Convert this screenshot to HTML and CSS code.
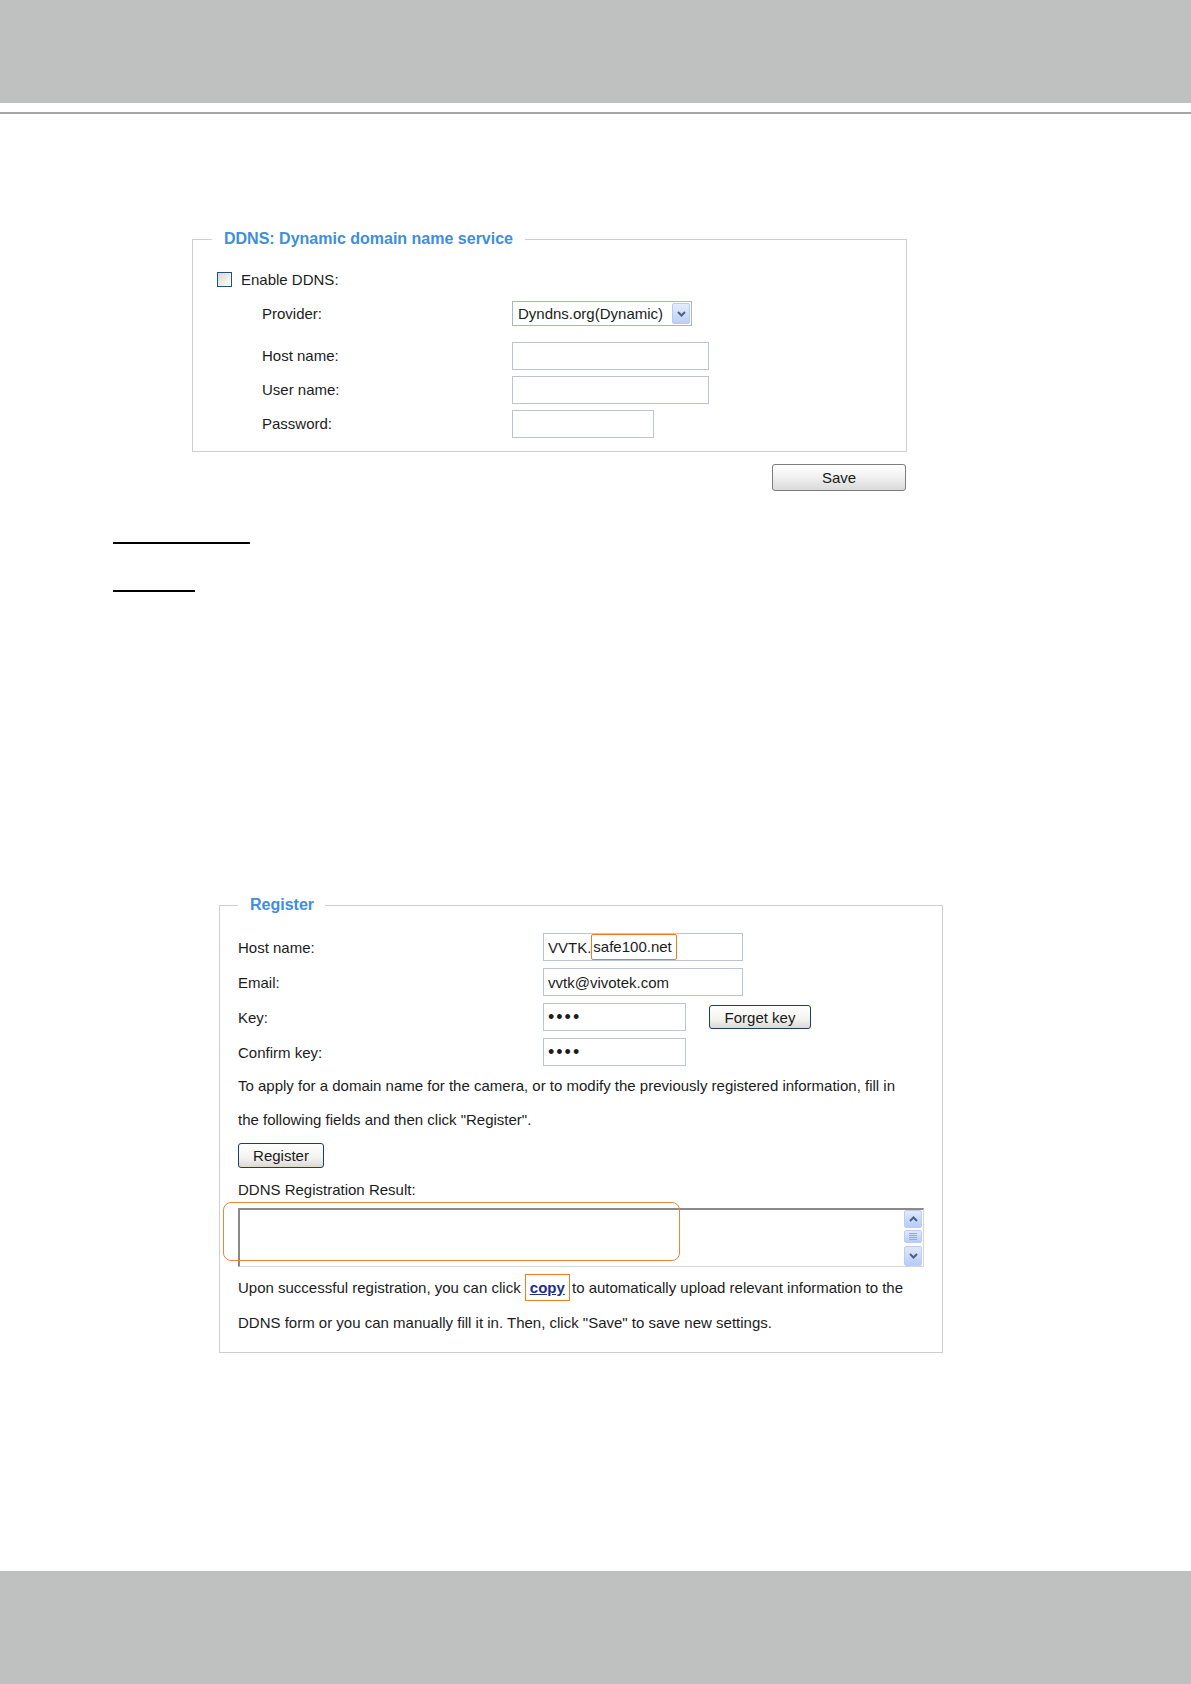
FILE: index.html
```html
<!DOCTYPE html>
<html lang="en">
  <head>
    <meta charset="UTF-8" />
    <meta name="viewport" content="width=device-width, initial-scale=1.0" />
    <title>DDNS — Network Settings</title>
    <link rel="stylesheet" href="styles.css">
  </head>
  <body>
    <div class="top-bar"></div>
    <div class="top-rule"></div>

    <main class="page">
      <div class="ddns-block">
        <fieldset class="panel panel-ddns">
          <legend>DDNS: Dynamic domain name service</legend>
          <div class="panel-body">
            <label class="form-row check-row">
              <span class="checkbox"></span>Enable DDNS:
            </label>
            <div class="form-row indent">
              <span class="field-label">Provider:</span>
              <div class="select">
                <span class="select-text">Dyndns.org(Dynamic)</span>
                <span class="select-arrow">
                  <svg width="9" height="6" viewBox="0 0 9 6"><path d="M1 1 L4.5 4.5 L8 1" fill="none" stroke="#4d6185" stroke-width="2"/></svg>
                </span>
              </div>
            </div>
            <div class="form-row indent spaced">
              <span class="field-label">Host name:</span>
              <input type="text" class="field field-wide">
            </div>
            <div class="form-row indent">
              <span class="field-label">User name:</span>
              <input type="text" class="field field-wide">
            </div>
            <div class="form-row indent">
              <span class="field-label">Password:</span>
              <input type="password" class="field field-short">
            </div>
          </div>
        </fieldset>
        <div class="save-row">
          <button class="btn btn-save">Save</button>
        </div>
      </div>

      <div class="blank-line blank-long"></div>
      <div class="blank-line blank-short"></div>

      <fieldset class="panel panel-register">
        <legend>Register</legend>
        <div class="panel-body">
          <div class="reg-rows">
            <div class="form-row">
              <span class="reg-label">Host name:</span>
              <div class="field field-host">VVTK.<span class="host-mark">safe100.net</span></div>
            </div>
            <div class="form-row">
              <span class="reg-label">Email:</span>
              <input type="text" class="field field-host" value="vvtk@vivotek.com">
            </div>
            <div class="form-row">
              <span class="reg-label">Key:</span>
              <input type="password" class="field field-key" value="abcd">
              <button class="btn btn-xp btn-forget">Forget key</button>
            </div>
            <div class="form-row">
              <span class="reg-label">Confirm key:</span>
              <input type="password" class="field field-key" value="abcd">
            </div>
          </div>

          <p class="note">To apply for a domain name for the camera, or to modify the previously registered information, fill in the following fields and then click "Register".</p>
          <button class="btn btn-xp btn-register">Register</button>

          <div class="result-label">DDNS Registration Result:</div>
          <div class="result-box">
            <div class="result-area"></div>
            <div class="scrollbar">
              <span class="sb-btn sb-up">
                <svg width="9" height="6" viewBox="0 0 9 6"><path d="M1 5 L4.5 1.5 L8 5" fill="none" stroke="#4d6185" stroke-width="2"/></svg>
              </span>
              <span class="sb-btn sb-thumb">
                <svg width="8" height="7" viewBox="0 0 8 7"><path d="M0 0.5 H8 M0 2.5 H8 M0 4.5 H8 M0 6.5 H8" stroke="#8fa8e0" stroke-width="1"/></svg>
              </span>
              <span class="sb-btn sb-down">
                <svg width="9" height="6" viewBox="0 0 9 6"><path d="M1 1 L4.5 4.5 L8 1" fill="none" stroke="#4d6185" stroke-width="2"/></svg>
              </span>
            </div>
            <span class="result-mark"></span>
          </div>

          <p class="note note-bottom">Upon successful registration, you can click <a class="copy-link" href="#">copy</a> to automatically upload relevant information to the DDNS form or you can manually fill it in. Then, click "Save" to save new settings.</p>
        </div>
      </fieldset>
    </main>

    <div class="bottom-bar"></div>
  </body>
</html>
```

FILE: styles.css
```css
* {
  box-sizing: border-box;
}

body {
  margin: 0;
  font-family: "Liberation Sans", Arial, sans-serif;
  font-size: 15px;
  color: #1c1c1c;
  background: #fff;
  display: flex;
  flex-direction: column;
  min-height: 100vh;
}

.top-bar {
  height: 103px;
  background: #bfc1c0;
}

.top-rule {
  height: 2px;
  margin-top: 9px;
  background: #a6a6a6;
}

.page {
  display: flex;
  flex-direction: column;
  align-items: flex-start;
}

/* shared fieldset look */
.panel {
  margin: 0;
  padding: 0;
  border: 1px solid #cfcfcf;
  min-inline-size: 0;
}

.panel legend {
  margin-left: 19px;
  padding: 0 12px;
  font-size: 16px;
  font-weight: bold;
  line-height: 18px;
  color: #3f8edb;
}

.form-row {
  display: flex;
  align-items: center;
  height: 29px;
}

.field {
  height: 28px;
  margin: 0;
  padding: 0 4px;
  border: 1px solid #bcc5d7;
  font-family: inherit;
  font-size: 15px;
  color: #1c1c1c;
  background: #fff;
  outline: none;
}

input[type="password"].field {
  font-size: 18px;
  letter-spacing: 2px;
}

.btn {
  padding: 0;
  font-family: inherit;
  font-size: 15px;
  color: #1a1a1a;
  border-radius: 3px;
  cursor: pointer;
}

/* DDNS block */
.ddns-block {
  width: 715px;
  margin: 116px 0 0 192px;
}

.panel-ddns {
  width: 100%;
}

.panel-ddns .panel-body {
  padding: 17px 0 13px 24px;
}

.panel-ddns .form-row + .form-row {
  margin-top: 5px;
}

.panel-ddns .form-row.spaced {
  margin-top: 13px;
}

.checkbox {
  width: 15px;
  height: 15px;
  margin-right: 9px;
  flex-shrink: 0;
  border: 1px solid #1d5281;
  background: linear-gradient(135deg, #d6d6d0, #f4f4f2 70%, #fff);
}

.indent .field-label {
  width: 250px;
  margin-left: 45px;
}

.select {
  display: flex;
  align-items: center;
  width: 180px;
  height: 25px;
  padding-left: 5px;
  border: 1px solid #a7b6ce;
  background: #fff;
}

.select-text {
  flex: 1;
}

.select-arrow {
  display: flex;
  align-items: center;
  justify-content: center;
  width: 18px;
  height: 21px;
  margin-right: 1px;
  border: 1px solid #b8c9f2;
  border-radius: 2px;
  background: linear-gradient(#e4ecfe, #bccff9);
}

.field-wide {
  width: 197px;
}

.field-short {
  width: 142px;
}

.save-row {
  display: flex;
  justify-content: flex-end;
  margin-top: 12px;
  padding-right: 1px;
}

.btn-save {
  width: 134px;
  height: 27px;
  border: 1px solid #7d7d7d;
  background: linear-gradient(#ffffff, #f2f2f2 45%, #dadada);
}

/* empty underlined headings */
.blank-line {
  height: 2px;
  margin-left: 113px;
  background: #000;
}

.blank-long {
  width: 137px;
  margin-top: 51px;
}

.blank-short {
  width: 82px;
  margin-top: 46px;
}

/* Register block */
.panel-register {
  width: 724px;
  margin: 304px 0 0 219px;
}

.panel-register legend {
  margin-left: 18px;
  padding: 0 11px 0 12px;
}

.panel-register .panel-body {
  padding: 19px 30px 12px 18px;
}

.reg-rows {
  display: flex;
  flex-direction: column;
  gap: 7px;
}

.reg-rows .form-row {
  height: 28px;
}

.reg-label {
  width: 305px;
  flex-shrink: 0;
}

.field-host {
  width: 200px;
}

div.field-host {
  display: flex;
  align-items: center;
}

.host-mark {
  display: inline-block;
  height: 26px;
  padding: 0 4px 0 1px;
  line-height: 24px;
  border: 1px solid #ef7d22;
  border-radius: 2px;
}

.field-key {
  width: 143px;
}

.btn-xp {
  border: 1px solid #1e3e68;
  background: linear-gradient(#ffffff, #f3f3ef 60%, #dcd9d0);
}

.btn-forget {
  width: 102px;
  height: 24px;
  margin-left: 23px;
}

.note {
  margin: 3px 0 0;
  line-height: 34px;
}

.note-bottom {
  line-height: 35px;
}

.btn-register {
  width: 86px;
  height: 25px;
  margin-top: 6px;
}

.result-label {
  margin-top: 13px;
  line-height: 17px;
}

.result-box {
  position: relative;
  display: flex;
  width: 686px;
  height: 59px;
  margin-top: 10px;
  border-top: 2px solid #8a8a8a;
  border-left: 2px solid #8a8a8a;
  border-right: 1px solid #d6d6d6;
  border-bottom: 1px solid #d6d6d6;
  background: #fff;
}

.result-area {
  flex: 1;
}

.scrollbar {
  display: flex;
  flex-direction: column;
  width: 18px;
  margin-right: 1px;
}

.sb-btn {
  display: flex;
  align-items: center;
  justify-content: center;
  border: 1px solid #bccdf5;
  border-radius: 2px;
  background: linear-gradient(#dfe8fe, #b8cbf7);
}

.sb-up {
  height: 18px;
}

.sb-thumb {
  height: 13px;
  margin: 2px 0 3px;
}

.sb-down {
  height: 20px;
}

.result-mark {
  position: absolute;
  left: -17px;
  top: -8px;
  width: 457px;
  height: 59px;
  border: 1px solid #ee8635;
  border-radius: 8px;
}

.copy-link {
  margin: 0 3px 0 5px;
  font-weight: bold;
  color: #1b2f8a;
  text-decoration: underline;
  outline: 1px solid #ef7d22;
  outline-offset: 4px;
}

.bottom-bar {
  height: 113px;
  margin-top: auto;
  background: #bfc1c0;
}
```
